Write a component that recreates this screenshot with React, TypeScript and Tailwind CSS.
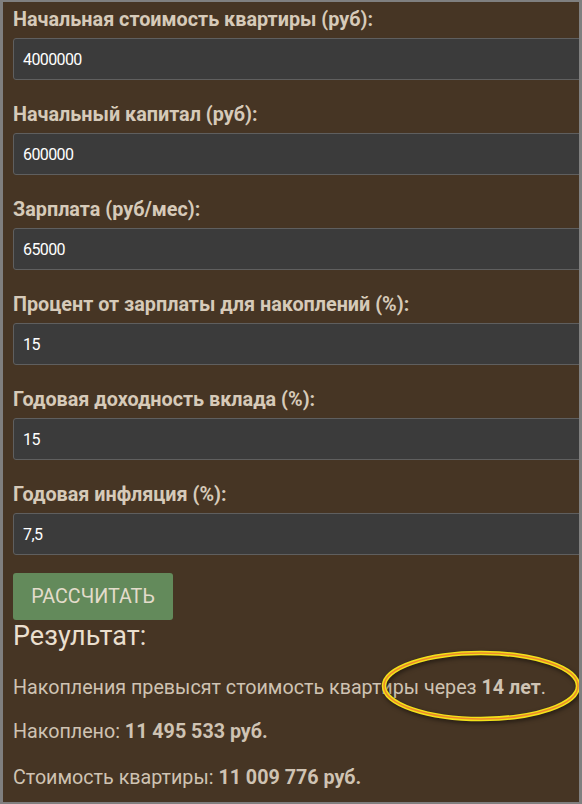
import React from "react";

const fields = [
  { label: "Начальная стоимость квартиры (руб):", value: "4000000" },
  { label: "Начальный капитал (руб):", value: "600000" },
  { label: "Зарплата (руб/мес):", value: "65000" },
  { label: "Процент от зарплаты для накоплений (%):", value: "15" },
  { label: "Годовая доходность вклада (%):", value: "15" },
  { label: "Годовая инфляция (%):", value: "7,5" },
];

export default function App() {
  return (
    <div
      className="w-[582px] h-[804px] border-l-[3px] border-r-[3px] border-t-2 border-b-2 border-[#7f7f7f] bg-[#463524] overflow-hidden relative"
      style={{ fontFamily: "Roboto, 'Liberation Sans', sans-serif" }}
    >
      <div className="pl-[10px] pt-[6px]">
        {fields.map((f) => (
          <div key={f.label} className="mb-[23px]">
            <div className="text-[19.8px] leading-[24px] font-bold text-[#d6cab9] mb-[6px]">
              {f.label}
            </div>
            <div className="w-[620px] h-[42px] rounded-[3px] border border-[#5f5f5f] bg-[#3b3b3b] flex items-center pl-[9px] pt-[2px] text-[16px] tracking-[-0.6px] text-white">
              {f.value}
            </div>
          </div>
        ))}
        <div className="-mt-[5px]">
          <button className="w-[160px] h-[47px] rounded-[3px] bg-[#638a5b] text-[#e3dccb] text-[19.7px] uppercase">
            Рассчитать
          </button>
        </div>
        <div className="text-[27px] leading-[29px] text-[#eadfce] mt-[2px]">Результат:</div>
        <div className="text-[19.7px] leading-[24px] text-[#cfc3b3]">
          <p className="mt-[25px]">
            Накопления превысят стоимость квартиры через <b className="font-bold">14 лет</b>.
          </p>
          <p className="mt-[20px]">
            Накоплено: <b className="font-bold">11 495 533 руб.</b>
          </p>
          <p className="mt-[22px]">
            Стоимость квартиры: <b className="font-bold">11 009 776 руб.</b>
          </p>
        </div>
      </div>
      <svg
        className="absolute left-[377px] top-[646px]"
        width="204"
        height="78"
        viewBox="0 0 204 78"
        style={{ filter: "drop-shadow(1px 2px 2px rgba(0,0,0,0.5))" }}
      >
        <ellipse cx="101" cy="38" rx="97" ry="33" fill="none" stroke="#f2e21a" strokeWidth="4.5" />
        <ellipse cx="101" cy="38" rx="97" ry="33" fill="none" stroke="#ee8a2a" strokeWidth="1.5" />
      </svg>
    </div>
  );
}
